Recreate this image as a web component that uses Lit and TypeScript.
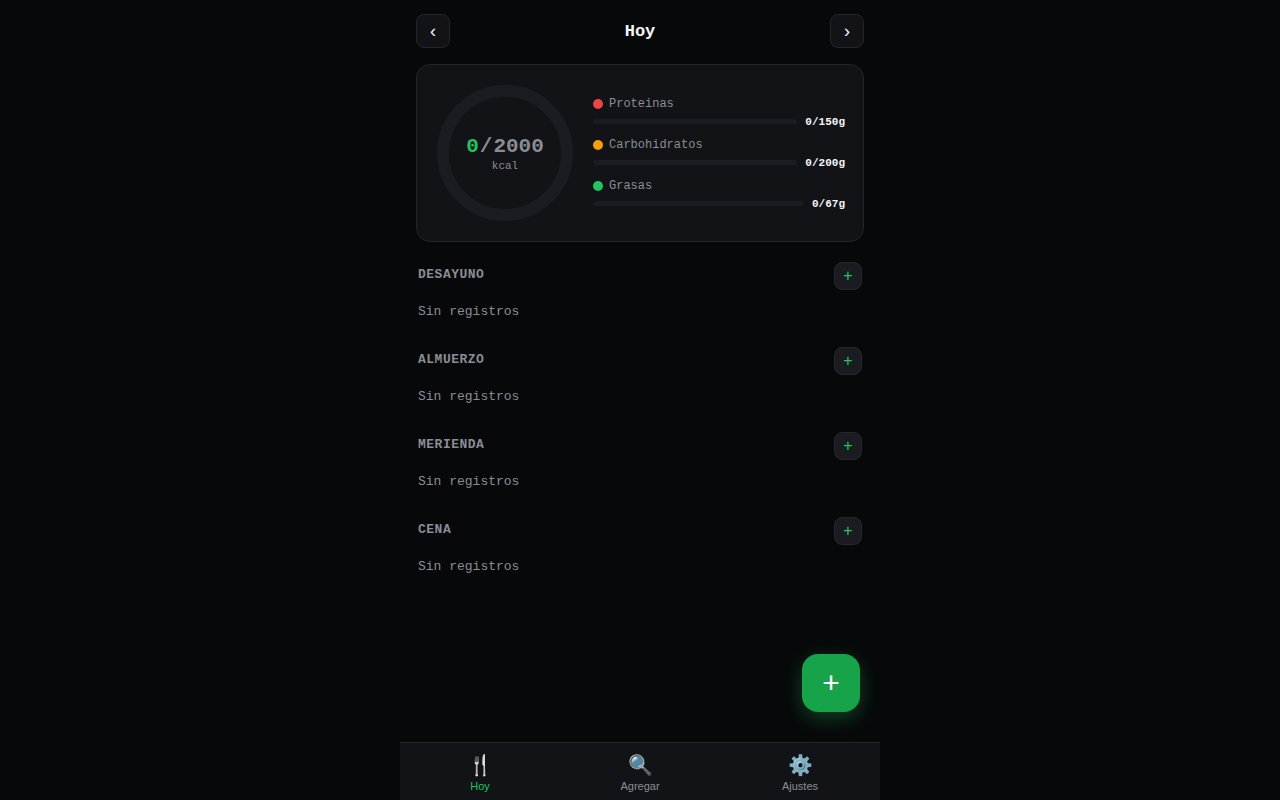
import { LitElement, html, css, svg } from "lit";
import { customElement, property } from "lit/decorators.js";
import { classMap } from "lit/directives/class-map.js";

interface Macro {
  id: string;
  name: string;
  value: number;
  goal: number;
}

const MACROS: Macro[] = [
  { id: "protein", name: "Proteinas", value: 0, goal: 150 },
  { id: "carbs", name: "Carbohidratos", value: 0, goal: 200 },
  { id: "fat", name: "Grasas", value: 0, goal: 67 },
];

const MEALS = ["Desayuno", "Almuerzo", "Merienda", "Cena"];

const TABS = [
  { icon: "🍴", label: "Hoy" },
  { icon: "🔍", label: "Agregar" },
  { icon: "⚙️", label: "Ajustes" },
];

@customElement("summary-card")
export class SummaryCard extends LitElement {
  static styles = css`
    :host {
      display: block;
    }
    .card {
      display: flex;
      align-items: center;
      gap: 18px;
      padding: 18px;
      background: #121317;
      border: 1px solid #25262b;
      border-radius: 14px;
    }
    .ring {
      display: grid;
      place-items: center;
      flex: none;
    }
    .ring > * {
      grid-area: 1 / 1;
    }
    .dial {
      display: block;
    }
    .track {
      fill: none;
      stroke: #1b1c21;
      stroke-width: 12;
    }
    .progress {
      fill: none;
      stroke: #22c55e;
      stroke-width: 12;
    }
    .center {
      text-align: center;
    }
    .kcal {
      font-size: 21px;
      line-height: 26px;
      font-weight: 700;
      color: #8b8d94;
    }
    .eaten {
      color: #22c55e;
    }
    .slash {
      margin: 0 1px;
    }
    .unit {
      font-size: 11px;
      line-height: 13px;
      color: #8b8d94;
    }
    .macros {
      flex: 1;
      min-width: 0;
      display: flex;
      flex-direction: column;
      gap: 10px;
    }
    .macro {
      display: flex;
      flex-direction: column;
      gap: 5px;
    }
    .name {
      display: flex;
      align-items: center;
      gap: 6px;
      font-size: 12px;
      line-height: 14px;
      color: #8b8d94;
    }
    .dot {
      width: 10px;
      height: 10px;
      border-radius: 50%;
    }
    .protein {
      background: #ef4444;
    }
    .carbs {
      background: #f59e0b;
    }
    .fat {
      background: #22c55e;
    }
    .row {
      display: flex;
      align-items: center;
      gap: 8px;
    }
    .bar {
      flex: 1;
      height: 5px;
      border-radius: 3px;
      background: #1b1c21;
      overflow: hidden;
    }
    .fill {
      height: 100%;
    }
    .amount {
      font-size: 11px;
      line-height: 12px;
      font-weight: 700;
      color: #f5f5f7;
    }
  `;

  @property({ type: Number }) eaten = 0;
  @property({ type: Number }) goal = 2000;

  render() {
    const length = 2 * Math.PI * 62;
    const done = length * Math.min(1, this.eaten / this.goal);
    return html`
      <section class="card">
        <div class="ring">
          <svg class="dial" width="140" height="140" viewBox="0 0 140 140" aria-hidden="true">
            <circle class="track" cx="70" cy="70" r="62" />
            ${done > 0
              ? svg`<circle class="progress" cx="70" cy="70" r="62"
                  stroke-dasharray="${done} ${length}" transform="rotate(-90 70 70)" />`
              : null}
          </svg>
          <div class="center">
            <div class="kcal"><span class="eaten">${this.eaten}</span><span class="slash">/</span>${this.goal}</div>
            <div class="unit">kcal</div>
          </div>
        </div>
        <div class="macros">
          ${MACROS.map(
            (m) => html`
              <div class="macro">
                <div class="name"><span class="dot ${m.id}"></span>${m.name}</div>
                <div class="row">
                  <div class="bar">
                    <div class="fill ${m.id}" style="width:${(100 * m.value) / m.goal}%"></div>
                  </div>
                  <div class="amount">${m.value}/${m.goal}g</div>
                </div>
              </div>
            `
          )}
        </div>
      </section>
    `;
  }
}

@customElement("meal-section")
export class MealSection extends LitElement {
  static styles = css`
    :host {
      display: block;
    }
    .head {
      display: flex;
      align-items: flex-start;
      justify-content: space-between;
      padding: 0 2px;
    }
    .title {
      margin: 0;
      padding-top: 5px;
      font-size: 13px;
      line-height: 15px;
      font-weight: 700;
      letter-spacing: 0.5px;
      text-transform: uppercase;
      color: #8b8d94;
    }
    .add {
      width: 28px;
      height: 28px;
      padding: 0;
      border: 1px solid #25262b;
      border-radius: 8px;
      background: #1b1c21;
      color: #22c55e;
      font-family: "Liberation Sans", Arial, sans-serif;
      font-size: 16px;
      line-height: 18px;
    }
    .empty {
      margin: 0;
      padding: 14px 2px;
      font-size: 13px;
      line-height: 15px;
      color: #8b8d94;
    }
  `;

  @property() name = "";

  render() {
    return html`
      <div class="head">
        <h2 class="title">${this.name}</h2>
        <button class="add" type="button" aria-label="Agregar">+</button>
      </div>
      <p class="empty">Sin registros</p>
    `;
  }
}

@customElement("app-root")
export class AppRoot extends LitElement {
  static styles = css`
    :host {
      display: flex;
      justify-content: center;
      min-height: 100vh;
      background: #07080a;
      color: #f5f5f7;
      font-family: "Liberation Mono", "Courier New", monospace;
    }
    .app {
      display: flex;
      flex-direction: column;
      width: 100%;
      max-width: 480px;
    }
    .top {
      display: flex;
      align-items: center;
      justify-content: space-between;
      padding: 14px 16px 16px;
    }
    .day {
      margin: 0;
      font-size: 17px;
      line-height: 21px;
      font-weight: 700;
    }
    .arrow {
      width: 34px;
      height: 34px;
      padding: 0;
      border: 1px solid #25262b;
      border-radius: 8px;
      background: #121317;
      color: #f5f5f7;
      font-family: "Liberation Sans", Arial, sans-serif;
      font-size: 18px;
      line-height: 20px;
    }
    .content {
      flex: 1;
      padding: 0 16px;
    }
    .meals {
      display: flex;
      flex-direction: column;
      gap: 14px;
      padding-top: 20px;
    }
    .bottom {
      position: sticky;
      bottom: 0;
    }
    .fab {
      position: absolute;
      right: 20px;
      bottom: 88px;
      width: 58px;
      height: 58px;
      padding: 0;
      border: 0;
      border-radius: 16px;
      background: #16a34a;
      box-shadow: 0 6px 20px rgba(34, 197, 94, 0.3);
      color: #ffffff;
      font-family: "Liberation Sans", Arial, sans-serif;
      font-size: 30px;
      line-height: 34px;
    }
    .tabs {
      display: flex;
      background: #121317;
      border-top: 1px solid #25262b;
    }
    .tab {
      flex: 1;
      display: flex;
      flex-direction: column;
      align-items: center;
      gap: 2px;
      padding: 10px 0 7px;
      color: #8b8d94;
      font-family: "Liberation Sans", Arial, sans-serif;
      font-size: 11px;
      line-height: 14px;
      text-decoration: none;
    }
    .tab.active {
      color: #22c55e;
    }
    .icon {
      font-size: 20px;
      line-height: 24px;
    }
  `;

  render() {
    return html`
      <div class="app">
        <header class="top">
          <button class="arrow" type="button" aria-label="Anterior">‹</button>
          <h1 class="day">Hoy</h1>
          <button class="arrow" type="button" aria-label="Siguiente">›</button>
        </header>
        <main class="content">
          <summary-card></summary-card>
          <div class="meals">
            ${MEALS.map((m) => html`<meal-section .name=${m}></meal-section>`)}
          </div>
        </main>
        <div class="bottom">
          <button class="fab" type="button" aria-label="Agregar">+</button>
          <nav class="tabs">
            ${TABS.map(
              (t, i) => html`
                <a class=${classMap({ tab: true, active: i === 0 })} href="#">
                  <span class="icon">${t.icon}</span>
                  <span>${t.label}</span>
                </a>
              `
            )}
          </nav>
        </div>
      </div>
    `;
  }
}
